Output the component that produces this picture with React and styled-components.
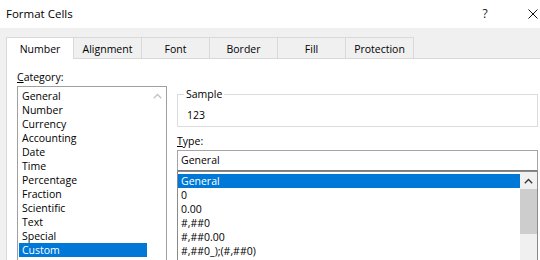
import React from 'react';
import styled, { createGlobalStyle } from 'styled-components';

const Global = createGlobalStyle`
  html, body { margin: 0; padding: 0; background: #fff; }
  body {
    font-family: "Open Sans", "Noto Sans", sans-serif;
    font-size: 10.5px;
    color: #000;
  }
  #root { width: 540px; height: 260px; overflow: hidden; }
  * { box-sizing: border-box; }
`;

const Window = styled.div`
  width: 540px;
  height: 260px;
  display: flex;
  flex-direction: column;
  overflow: hidden;
`;

const TitleBar = styled.div`
  height: 28px;
  flex: none;
  display: flex;
  align-items: center;
  background: #fff;
  padding: 0 2px 0 6px;
`;

const Title = styled.div`
  flex: 1;
  font-size: 11.5px;
  line-height: 14px;
  color: #000;
`;

const HelpButton = styled.div`
  width: 20px;
  text-align: center;
  font-size: 12px;
  line-height: 14px;
  color: #222;
  margin-right: 33px;
`;

const CloseButton = styled.div`
  width: 10px;
  height: 10px;
  display: flex;
`;

const Body = styled.div`
  flex: 1;
  background: #f0f0f0;
  padding: 9px 0 0 6px;
  display: flex;
  flex-direction: column;
  min-height: 0;
`;

const TabStrip = styled.div`
  display: flex;
  align-items: flex-start;
  height: 21px;
  flex: none;
`;

const Tab = styled.div`
  position: relative;
  z-index: ${(p) => (p.$active ? 1 : 0)};
  width: 68px;
  height: ${(p) => (p.$active ? 22 : 21)}px;
  border: 1px solid #d9d9d9;
  border-bottom: none;
  border-left: ${(p) => (p.$first ? '1px solid #d9d9d9' : 'none')};
  background: ${(p) => (p.$active ? '#fff' : '#f0f0f0')};
  display: flex;
  justify-content: center;
  padding-top: 4px;
  line-height: 14px;
  color: #000;
`;

const Panel = styled.div`
  flex: 1;
  background: #fff;
  border-top: 1px solid #d9d9d9;
  border-left: 1px solid #d9d9d9;
  display: grid;
  grid-template-columns: 150px 361px;
  column-gap: 10px;
  padding: 11px 0 0 10px;
  align-items: start;
  min-height: 0;
`;

const Column = styled.div`
  display: flex;
  flex-direction: column;
`;

const FieldLabel = styled.div`
  line-height: 14px;
  margin-top: ${(p) => p.$top || 0}px;
  margin-bottom: 2px;
`;

const ListBox = styled.div`
  height: ${(p) => p.$height}px;
  border: 1px solid ${(p) => p.$border};
  display: flex;
  background: #fff;
`;

const Items = styled.div`
  flex: 1;
  padding: 2px ${(p) => p.$padX}px 0;
  min-width: 0;
`;

const Item = styled.div`
  height: 14px;
  line-height: 14px;
  padding-left: 3px;
  white-space: nowrap;
  background: ${(p) => (p.$selected ? '#0078d7' : 'transparent')};
  color: ${(p) => (p.$selected ? '#fff' : '#000')};
`;

const ScrollBar = styled.div`
  width: ${(p) => p.$width}px;
  flex: none;
  display: flex;
  flex-direction: column;
  background: ${(p) => p.$bg};
`;

const ScrollButton = styled.div`
  height: 17px;
  flex: none;
  display: flex;
  align-items: center;
  justify-content: center;
  background: ${(p) => p.$bg};
`;

const Thumb = styled.div`
  height: 45px;
  flex: none;
  background: #cdcdcd;
`;

const Track = styled.div`
  flex: 1;
  background: #f0f0f0;
`;

const GroupBox = styled.fieldset`
  margin: 17px 0 0;
  padding: 7px 6px 4px;
  border: 1px solid #dcdcdc;
  min-inline-size: 0;
`;

const Legend = styled.legend`
  padding: 0 2px;
  line-height: 14px;
`;

const SampleValue = styled.div`
  line-height: 14px;
  padding-left: 3px;
`;

const TextBox = styled.div`
  height: 21px;
  border: 1px solid #a6a6a6;
  border-bottom-color: #7a7a7a;
  padding: 2px 3px 0;
  line-height: 14px;
`;

const ChevronUp = ({ color }) => (
  <svg width="9" height="6" viewBox="0 0 9 6">
    <polyline points="0.8,5.2 4.5,1.5 8.2,5.2" fill="none" stroke={color} strokeWidth="1.3" />
  </svg>
);

const categories = [
  'General', 'Number', 'Currency', 'Accounting', 'Date', 'Time',
  'Percentage', 'Fraction', 'Scientific', 'Text', 'Special', 'Custom',
];

const types = ['General', '0', '0.00', '#,##0', '#,##0.00', '#,##0_);(#,##0)'];

const tabs = ['Number', 'Alignment', 'Font', 'Border', 'Fill', 'Protection'];

export default function App() {
  return (
    <>
      <Global />
      <Window>
        <TitleBar>
          <Title>Format Cells</Title>
          <HelpButton>?</HelpButton>
          <CloseButton>
            <svg width="10" height="10" viewBox="0 0 10 10">
              <line x1="0.5" y1="0.5" x2="9.5" y2="9.5" stroke="#111" strokeWidth="1" />
              <line x1="9.5" y1="0.5" x2="0.5" y2="9.5" stroke="#111" strokeWidth="1" />
            </svg>
          </CloseButton>
        </TitleBar>
        <Body>
          <TabStrip>
            {tabs.map((t, i) => (
              <Tab key={t} $active={i === 0} $first={i === 0}>{t}</Tab>
            ))}
          </TabStrip>
          <Panel>
            <Column>
              <FieldLabel><u>C</u>ategory:</FieldLabel>
              <ListBox $height={200} $border="#a0a0a0">
                <Items $padX={1}>
                  {categories.map((c) => (
                    <Item key={c} $selected={c === 'Custom'}>{c}</Item>
                  ))}
                </Items>
                <ScrollBar $width={18} $bg="#fff">
                  <ScrollButton $bg="#fff">
                    <ChevronUp color="#c2c2c2" />
                  </ScrollButton>
                </ScrollBar>
              </ListBox>
            </Column>
            <Column>
              <GroupBox>
                <Legend>Sample</Legend>
                <SampleValue>123</SampleValue>
              </GroupBox>
              <FieldLabel $top={7}><u>T</u>ype:</FieldLabel>
              <TextBox>General</TextBox>
              <ListBox $height={120} $border="#8a8a8a">
                <Items $padX={0}>
                  {types.map((t) => (
                    <Item key={t} $selected={t === 'General'}>{t}</Item>
                  ))}
                </Items>
                <ScrollBar $width={17} $bg="#f0f0f0">
                  <ScrollButton $bg="#f0f0f0">
                    <ChevronUp color="#333" />
                  </ScrollButton>
                  <Thumb />
                  <Track />
                </ScrollBar>
              </ListBox>
            </Column>
          </Panel>
        </Body>
      </Window>
    </>
  );
}
